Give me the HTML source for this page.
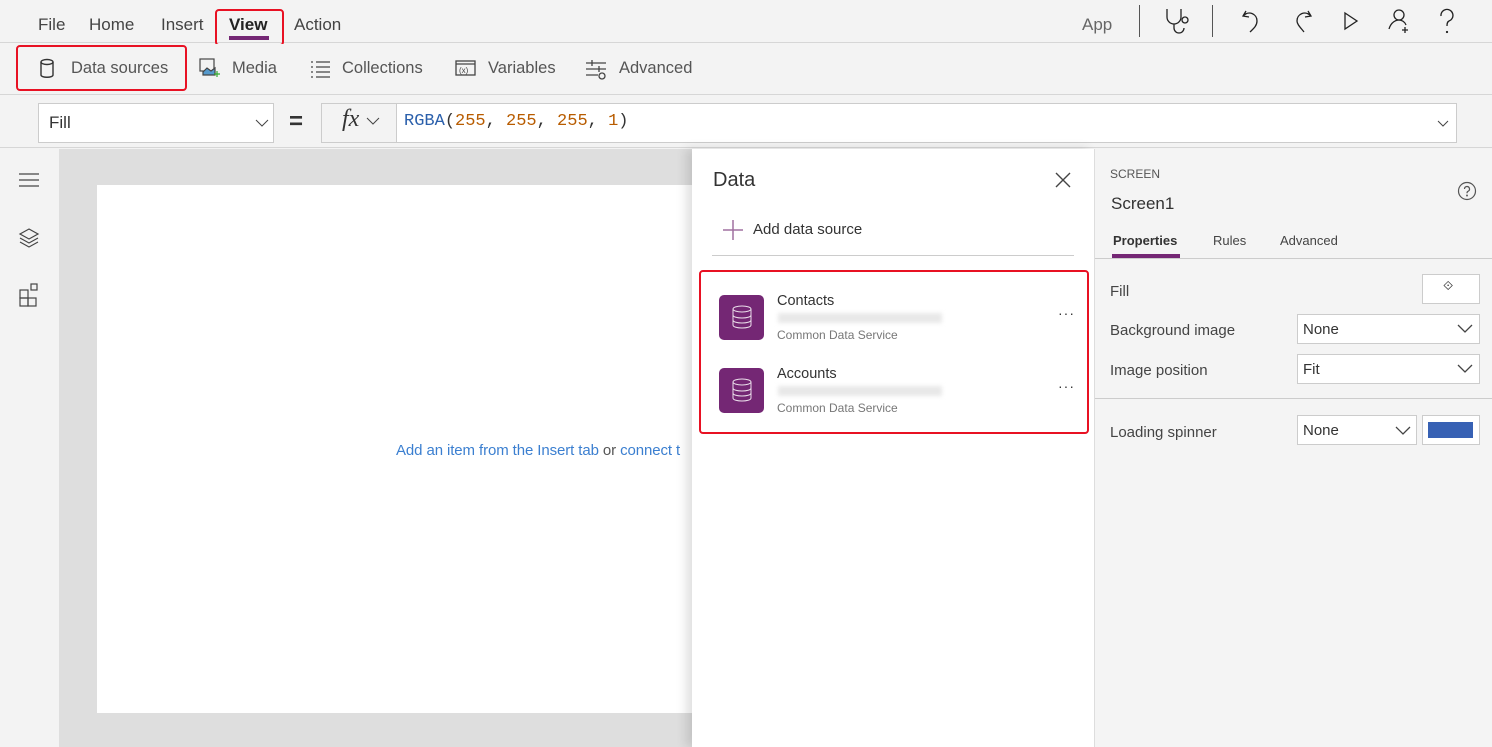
<!DOCTYPE html>
<html><head><style>
*{box-sizing:border-box;margin:0;padding:0}
body{width:1492px;height:747px;overflow:hidden;font-family:"Liberation Sans",sans-serif;background:#f3f3f3;position:relative;color:#333}
.a{position:absolute}
.t{position:absolute;white-space:nowrap}
</style></head><body>
<div class="a" style="left:0;top:0;width:1492px;height:43px;background:#f3f3f3;border-bottom:1px solid #d6d6d6"></div>
<div class="t" style="left:38px;top:15px;font-size:17px;color:#444">File</div>
<div class="t" style="left:89px;top:15px;font-size:17px;color:#444">Home</div>
<div class="t" style="left:161px;top:15px;font-size:17px;color:#444">Insert</div>
<div class="t" style="left:229px;top:15px;font-size:17px;color:#222;font-weight:bold">View</div>
<div class="a" style="left:229px;top:36px;width:40px;height:4px;background:#742774"></div>
<div class="a" style="left:215px;top:9px;width:69px;height:37px;border:2px solid #e81123;border-radius:4px"></div>
<div class="t" style="left:294px;top:15px;font-size:17px;color:#444">Action</div>
<div class="t" style="left:1082px;top:15px;font-size:17px;color:#666">App</div>
<div class="a" style="left:1139px;top:5px;width:1px;height:32px;background:#555"></div>
<div class="a" style="left:1212px;top:5px;width:1px;height:32px;background:#555"></div>
<svg class="a" style="left:1160px;top:5px" width="350" height="34" fill="none" stroke="#222" stroke-width="1.3">
<path d="M7 4v8a7 7 0 0 0 14 0V4M14 19v4a5 5 0 0 0 10 0"/><circle cx="25" cy="15" r="3"/>
<path d="M86 6l-3 5 6 1M83 11c6-6 14-2 14 5 0 5-4 8-7 11"/>
<path d="M148 6l3 5-6 1M151 11c-6-6-14-2-14 5 0 3 3 6 7 11"/>
<path d="M185 8l12 8-12 8z"/>
<circle cx="239" cy="10" r="5"/><path d="M229 24c2-7 7-9 10-9s6 2 7 5M245 22v6M242 25h6"/>
<path d="M281 11a6 6 0 1 1 8 5c-2 1-2 3-2 5"/><circle cx="287" cy="27" r=".5"/>
</svg>
<div class="a" style="left:0;top:44px;width:1492px;height:51px;background:#f3f3f3;border-bottom:1px solid #d6d6d6"></div>
<div class="a" style="left:16px;top:45px;width:171px;height:46px;border:2px solid #e81123;border-radius:4px"></div>
<svg class="a" style="left:38px;top:58px" width="20" height="22" fill="none" stroke="#333" stroke-width="1.4"><ellipse cx="9" cy="4" rx="6" ry="2.5"/><path d="M3 4v13c0 3 12 3 12 0V4"/></svg>
<div class="t" style="left:71px;top:59px;font-size:16.5px;color:#555">Data sources</div>
<svg class="a" style="left:199px;top:57px" width="22" height="22" fill="none" stroke="#444" stroke-width="1.2"><rect x="1" y="2" width="14" height="12"/><path d="M4 15l4-4 4 3 4-3v7H4z" fill="#59c"/><path d="M15 17h6M18 14v6" stroke="#3a3"/></svg>
<div class="t" style="left:232px;top:59px;font-size:16.5px;color:#555">Media</div>
<svg class="a" style="left:310px;top:60px" width="22" height="18" stroke="#444" stroke-width="1.3"><path d="M1 2h2M6 2h14M1 7h2M6 7h14M1 12h2M6 12h14M1 17h2M6 17h14"/></svg>
<div class="t" style="left:342px;top:59px;font-size:16.5px;color:#555">Collections</div>
<svg class="a" style="left:455px;top:60px" width="22" height="18" fill="none" stroke="#444" stroke-width="1.3"><rect x="1" y="1" width="19" height="14"/><path d="M1 4h19"/><text x="4" y="13" font-size="8" fill="#444" stroke="none">(x)</text></svg>
<div class="t" style="left:488px;top:59px;font-size:16.5px;color:#555">Variables</div>
<svg class="a" style="left:585px;top:58px" width="22" height="22" fill="none" stroke="#444" stroke-width="1.3"><path d="M1 5h20M1 11h20M1 17h12M7 2v6M14 8v6"/><circle cx="17" cy="18" r="3"/></svg>
<div class="t" style="left:619px;top:59px;font-size:16.5px;color:#555">Advanced</div>
<div class="a" style="left:0;top:96px;width:1492px;height:52px;background:#f3f3f3;border-bottom:1px solid #d6d6d6"></div>
<div class="a" style="left:38px;top:103px;width:236px;height:40px;background:#fff;border:1px solid #ccc"></div>
<div class="t" style="left:49px;top:113px;font-size:17px;color:#333">Fill</div>
<svg class="a" style="left:255px;top:119px" width="14" height="8" fill="none" stroke="#444"><path d="M1 1l6 6 6-6"/></svg>
<div class="t" style="left:289px;top:108px;font-size:24px;font-weight:bold;color:#333">=</div>
<div class="a" style="left:321px;top:103px;width:1136px;height:40px;background:#fff;border:1px solid #ccc"></div>
<div class="a" style="left:322px;top:104px;width:75px;height:38px;background:#f3f3f3;border-right:1px solid #ccc"></div>
<div class="t" style="left:342px;top:106px;font-size:24px;font-style:italic;font-family:'Liberation Serif',serif">fx</div>
<svg class="a" style="left:366px;top:117px" width="14" height="8" fill="none" stroke="#444"><path d="M1 1l6 6 6-6"/></svg>
<div class="t" style="left:404px;top:112px;font-size:17px;font-family:'Liberation Mono',monospace;color:#2a5fab">RGBA<span style="color:#333">(</span><span style="color:#b85c00">255</span><span style="color:#333">, </span><span style="color:#b85c00">255</span><span style="color:#333">, </span><span style="color:#b85c00">255</span><span style="color:#333">, </span><span style="color:#b85c00">1</span><span style="color:#333">)</span></div>
<svg class="a" style="left:1437px;top:120px" width="12" height="7" fill="none" stroke="#444"><path d="M1 1l5 5 5-5"/></svg>
<div class="a" style="left:0;top:149px;width:59px;height:598px;background:#f3f3f3"></div>
<svg class="a" style="left:18px;top:170px" width="24" height="150" fill="none" stroke="#444" stroke-width="1.2">
<path d="M1 4h20M1 10h20M1 16h20"/>
<path d="M11 59l9 5-9 5-9-5z M2 68l9 5 9-5M2 72l9 5 9-5"/>
<rect x="2" y="120" width="8" height="8"/><rect x="2" y="128" width="8" height="8"/><rect x="10" y="128" width="8" height="8"/><rect x="13" y="114" width="6" height="6"/>
</svg>
<div class="a" style="left:59px;top:149px;width:634px;height:598px;background:#dedede"></div>
<div class="a" style="left:97px;top:185px;width:596px;height:528px;background:#fff"></div>
<div class="t" style="left:396px;top:442px;font-size:15px;color:#3b7fd0;letter-spacing:-0.1px">Add an item from the Insert tab <span style="color:#555">or</span> connect t</div>
<div class="a" style="left:692px;top:149px;width:402px;height:598px;background:#fff;box-shadow:-6px 0 10px rgba(0,0,0,.12)"></div>
<div class="t" style="left:713px;top:169px;font-size:20px;color:#333">Data</div>
<svg class="a" style="left:1055px;top:172px" width="16" height="16" stroke="#444" stroke-width="1.4"><path d="M1 1l14 14M15 1L1 15"/></svg>
<svg class="a" style="left:722px;top:219px" width="22" height="22" stroke="#a070a0" stroke-width="1.5"><path d="M11 1v20M1 11h20"/></svg>
<div class="t" style="left:753px;top:221px;font-size:15px;color:#333">Add data source</div>
<div class="a" style="left:712px;top:255px;width:362px;height:1px;background:#ccc"></div>
<div class="a" style="left:699px;top:270px;width:390px;height:164px;border:2px solid #e81123;border-radius:4px"></div>
<div class="a" style="left:719px;top:295px;width:45px;height:45px;background:#742774;border-radius:5px"></div>
<div class="a" style="left:719px;top:368px;width:45px;height:45px;background:#742774;border-radius:5px"></div>
<svg class="a" style="left:730px;top:304px" width="24" height="100" fill="none" stroke="#fff" stroke-width="1" opacity=".85">
<ellipse cx="12" cy="5" rx="9" ry="3"/><path d="M3 5v16c0 4 18 4 18 0V5M3 11c0 4 18 4 18 0M3 16c0 4 18 4 18 0"/>
<g transform="translate(0,73)"><ellipse cx="12" cy="5" rx="9" ry="3"/><path d="M3 5v16c0 4 18 4 18 0V5M3 11c0 4 18 4 18 0M3 16c0 4 18 4 18 0"/></g>
</svg>
<div class="t" style="left:777px;top:293px;font-size:14.5px;color:#333">Contacts</div>
<div class="a" style="left:778px;top:313px;width:164px;height:10px;background:#e8e8e8;filter:blur(2px)"></div>
<div class="t" style="left:777px;top:328px;font-size:12px;color:#777">Common Data Service</div>
<div class="t" style="left:777px;top:366px;font-size:14.5px;color:#333">Accounts</div>
<div class="a" style="left:778px;top:386px;width:164px;height:10px;background:#e8e8e8;filter:blur(2px)"></div>
<div class="t" style="left:777px;top:401px;font-size:12px;color:#777">Common Data Service</div>
<div class="t" style="left:1058px;top:305px;font-size:14px;color:#333;letter-spacing:1px">···</div>
<div class="t" style="left:1058px;top:378px;font-size:14px;color:#333;letter-spacing:1px">···</div>
<div class="a" style="left:1094px;top:149px;width:398px;height:598px;background:#f4f4f4;border-left:1px solid #ddd"></div>
<div class="t" style="left:1110px;top:167px;font-size:12px;color:#555">SCREEN</div>
<div class="t" style="left:1111px;top:194px;font-size:17px;color:#333">Screen1</div>
<svg class="a" style="left:1457px;top:181px" width="20" height="20" fill="none" stroke="#555" stroke-width="1.2"><circle cx="10" cy="10" r="8.5"/><path d="M7.5 8a2.5 2.5 0 1 1 3.5 2.3c-1 .4-1 1.2-1 2"/><circle cx="10" cy="14.5" r=".4"/></svg>
<div class="t" style="left:1113px;top:233px;font-size:13px;font-weight:bold;color:#333">Properties</div>
<div class="a" style="left:1112px;top:254px;width:68px;height:4px;background:#742774"></div>
<div class="t" style="left:1213px;top:233px;font-size:13px;color:#444">Rules</div>
<div class="t" style="left:1280px;top:233px;font-size:13px;color:#444">Advanced</div>
<div class="a" style="left:1095px;top:258px;width:397px;height:1px;background:#ccc"></div>
<div class="t" style="left:1110px;top:283px;font-size:15px;color:#444">Fill</div>
<div class="a" style="left:1422px;top:274px;width:58px;height:30px;background:#fff;border:1px solid #ccc"></div>
<div class="t" style="left:1443px;top:278px;font-size:13px;color:#333">⟐</div>
<div class="t" style="left:1110px;top:322px;font-size:15px;color:#444">Background image</div>
<div class="a" style="left:1297px;top:314px;width:183px;height:30px;background:#fff;border:1px solid #ccc"></div>
<div class="t" style="left:1303px;top:321px;font-size:15px;color:#333">None</div>
<div class="t" style="left:1110px;top:362px;font-size:15px;color:#444">Image position</div>
<div class="a" style="left:1297px;top:354px;width:183px;height:30px;background:#fff;border:1px solid #ccc"></div>
<div class="t" style="left:1303px;top:361px;font-size:15px;color:#333">Fit</div>
<div class="a" style="left:1095px;top:398px;width:397px;height:1px;background:#ccc"></div>
<div class="t" style="left:1110px;top:424px;font-size:15px;color:#444">Loading spinner</div>
<div class="a" style="left:1297px;top:415px;width:120px;height:30px;background:#fff;border:1px solid #ccc"></div>
<div class="t" style="left:1303px;top:422px;font-size:15px;color:#333">None</div>
<div class="a" style="left:1422px;top:415px;width:58px;height:30px;background:#fff;border:1px solid #ccc"></div>
<div class="a" style="left:1428px;top:422px;width:45px;height:16px;background:#3761b4"></div>
<svg class="a" style="left:1457px;top:324px" width="16" height="60" fill="none" stroke="#444" stroke-width="1.3"><path d="M1 1l7 7 7-7M1 41l7 7 7-7"/></svg>
<svg class="a" style="left:1395px;top:426px" width="16" height="10" fill="none" stroke="#444" stroke-width="1.3"><path d="M1 1l7 7 7-7"/></svg>
</body></html>
